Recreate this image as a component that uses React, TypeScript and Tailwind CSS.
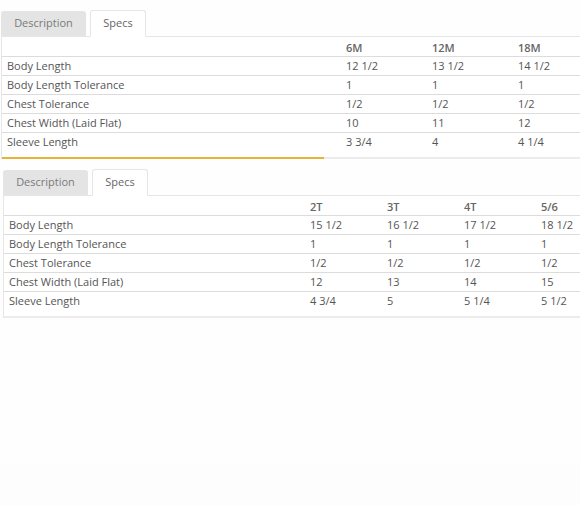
import React from 'react';

interface SpecTable {
  sizes: string[];
  rows: { label: string; values: string[] }[];
}

const babyTable: SpecTable = {
  sizes: ['6M', '12M', '18M'],
  rows: [
    { label: 'Body Length', values: ['12 1/2', '13 1/2', '14 1/2'] },
    { label: 'Body Length Tolerance', values: ['1', '1', '1'] },
    { label: 'Chest Tolerance', values: ['1/2', '1/2', '1/2'] },
    { label: 'Chest Width (Laid Flat)', values: ['10', '11', '12'] },
    { label: 'Sleeve Length', values: ['3 3/4', '4', '4 1/4'] },
  ],
};

const toddlerTable: SpecTable = {
  sizes: ['2T', '3T', '4T', '5/6'],
  rows: [
    { label: 'Body Length', values: ['15 1/2', '16 1/2', '17 1/2', '18 1/2'] },
    { label: 'Body Length Tolerance', values: ['1', '1', '1', '1'] },
    { label: 'Chest Tolerance', values: ['1/2', '1/2', '1/2', '1/2'] },
    { label: 'Chest Width (Laid Flat)', values: ['12', '13', '14', '15'] },
    { label: 'Sleeve Length', values: ['4 3/4', '5', '5 1/4', '5 1/2'] },
  ],
};

function Tabs() {
  return (
    <div className="flex items-end h-[26px]">
      <div className="h-[25px] w-[85px] bg-[#e4e4e4] rounded-t-[3px] flex items-center justify-center text-[#7a7a7a]">
        Description
      </div>
      <div className="h-[27px] w-[56px] ml-[4px] -mb-px bg-white border border-[#e6e6e6] border-b-white rounded-t-[3px] flex items-center justify-center text-[#666] relative z-10">
        Specs
      </div>
    </div>
  );
}

function SpecsBlock({
  table,
  labelWidth,
  colWidth,
  gold,
}: {
  table: SpecTable;
  labelWidth: number;
  colWidth: number;
  gold?: boolean;
}) {
  const cols = `${labelWidth}px repeat(${table.sizes.length}, ${colWidth}px)`;
  return (
    <div>
      <Tabs />
      <div className="w-[640px] bg-white border-t border-l border-[#e6e6e6]">
        <div className="grid h-[20px] items-center border-b border-[#dcdcdc]" style={{ gridTemplateColumns: cols }}>
          <div />
          {table.sizes.map((s) => (
            <div key={s} className="pl-[5px] pt-[3px] font-semibold text-[#666]">
              {s}
            </div>
          ))}
        </div>
        {table.rows.map((row, i) => (
          <div
            key={row.label}
            className={`grid h-[19px] items-center ${i < table.rows.length - 1 ? 'border-b border-[#dcdcdc]' : ''}`}
            style={{ gridTemplateColumns: cols }}
          >
            <div className="pl-[5px] text-[#555]">{row.label}</div>
            {row.values.map((v, j) => (
              <div key={j} className="pl-[5px] text-[#555]">
                {v}
              </div>
            ))}
          </div>
        ))}
        <div className="h-[5px]" />
        <div className="h-[2px] bg-[#ececec] flex">
          {gold && <div className="w-[322px] h-[2px] bg-[#e8b13a]" />}
        </div>
      </div>
    </div>
  );
}

export default function App() {
  return (
    <div className="w-[580px] h-[505px] overflow-hidden bg-[#fefefe] text-[11px] font-['Open_Sans',sans-serif]">
      <div className="pt-[10px] pl-[1px]">
        <SpecsBlock table={babyTable} labelWidth={339} colWidth={86} gold />
      </div>
      <div className="pt-[10px] pl-[3px]">
        <SpecsBlock table={toddlerTable} labelWidth={301} colWidth={77} />
      </div>
      <div className="mt-[146px] h-[60px] bg-[#fdfdfd]" />
    </div>
  );
}
